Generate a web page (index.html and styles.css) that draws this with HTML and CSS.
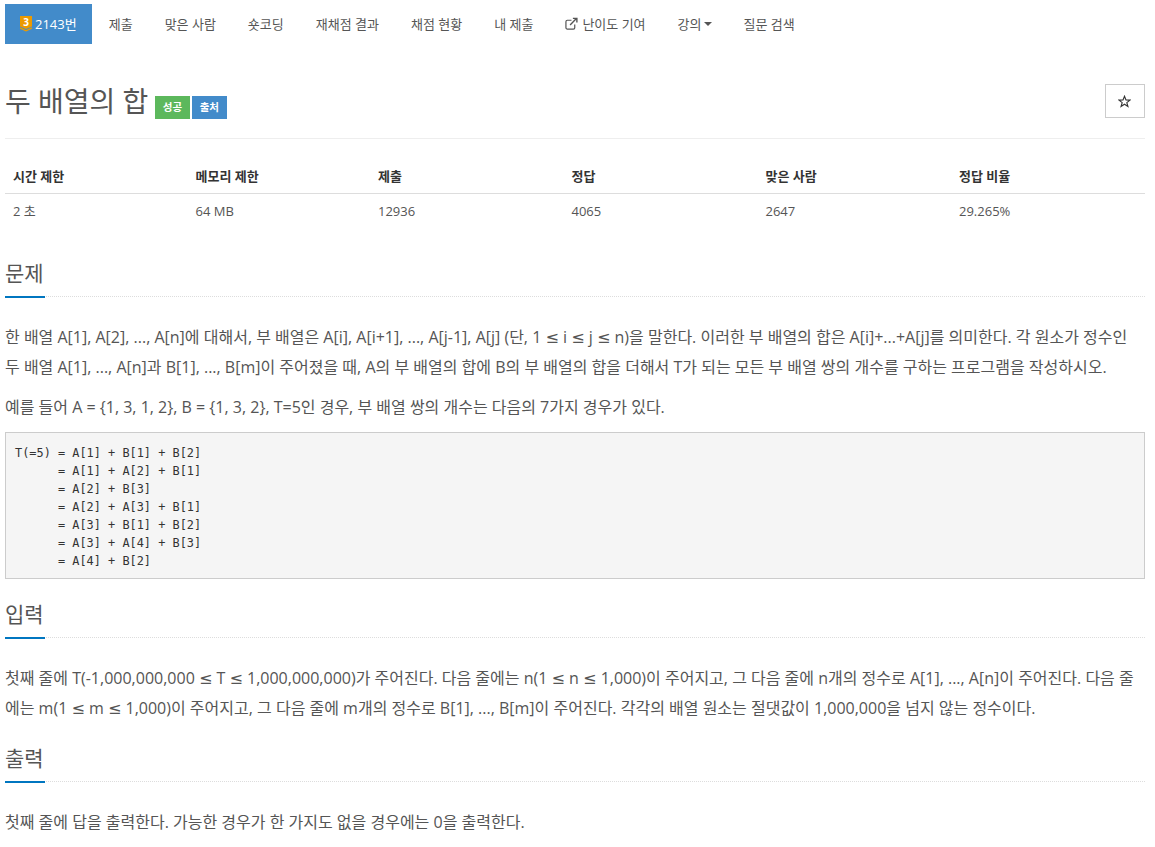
FILE: index.html
```html
<!DOCTYPE html>
<html lang="ko">
<head>
<meta charset="utf-8">
<title>두 배열의 합</title>
<link rel="stylesheet" href="styles.css">
</head>
<body>
<nav class="tabs">
  <a class="tab active"><svg class="medal" viewBox="0 0 12 16" width="12" height="16"><path d="M0 0H12V10.500L6 13L0 10.500Z" fill="#ec9a00"/><path d="M0 12L6 14.800L12 12" fill="none" stroke="#ec9a00" stroke-width="1.400"/><text x="6" y="10" class="medal-num">3</text></svg>2143번</a>
  <a class="tab">제출</a>
  <a class="tab">맞은 사람</a>
  <a class="tab">숏코딩</a>
  <a class="tab">재채점 결과</a>
  <a class="tab">채점 현황</a>
  <a class="tab">내 제출</a>
  <a class="tab"><svg class="ext" viewBox="0 0 14 14" width="13" height="13"><path d="M10.500 8V11.500A1.500 1.500 0 0 1 9 13H2.500A1.500 1.500 0 0 1 1 11.500V5A1.500 1.500 0 0 1 2.500 3.500H7" fill="none" stroke="#555" stroke-width="1.300"/><path d="M5.500 8.500L12 2M8.500 1.500H12.800V5.800" fill="none" stroke="#555" stroke-width="1.500"/></svg>난이도 기여</a>
  <a class="tab">강의<span class="caret"></span></a>
  <a class="tab">질문 검색</a>
</nav>

<header class="title-row">
  <h1 class="title">두 배열의 합</h1>
  <span class="label green">성공</span>
  <span class="label blue">출처</span>
  <button class="star"><svg viewBox="0 0 14 14" width="13" height="13"><path d="M7 1.300L8.600 5.300L12.900 5.500L9.500 8.200L10.700 12.400L7 10L3.300 12.400L4.500 8.200L1.100 5.500L5.400 5.300Z" fill="none" stroke="#333" stroke-width="1.200"/></svg></button>
</header>

<table class="stats">
  <thead>
    <tr><th class="c1">시간 제한</th><th class="c2">메모리 제한</th><th class="c3">제출</th><th class="c4">정답</th><th class="c5">맞은 사람</th><th>정답 비율</th></tr>
  </thead>
  <tbody>
    <tr><td>2 초</td><td>64 MB</td><td>12936</td><td>4065</td><td>2647</td><td>29.265%</td></tr>
  </tbody>
</table>

<section class="section">
  <div class="head"><h2 class="head-text">문제</h2></div>
  <p class="para"><span class="line">한 배열 A[1], A[2], ..., A[n]에 대해서, 부 배열은 A[i], A[i+1], ..., A[j-1], A[j] (단, 1 <span class="le">≤</span> i <span class="le">≤</span> j <span class="le">≤</span> n)을 말한다. 이러한 부 배열의 합은 A[i]+...+A[j]를 의미한다. 각 원소가 정수인</span><span class="line">두 배열 A[1], ..., A[n]과 B[1], ..., B[m]이 주어졌을 때, A의 부 배열의 합에 B의 부 배열의 합을 더해서 T가 되는 모든 부 배열 쌍의 개수를 구하는 프로그램을 작성하시오.</span></p>
  <p class="para">예를 들어 A = {1, 3, 1, 2}, B = {1, 3, 2}, T=5인 경우, 부 배열 쌍의 개수는 다음의 7가지 경우가 있다.</p>
  <pre class="code">T(=5) = A[1] + B[1] + B[2]
      = A[1] + A[2] + B[1]
      = A[2] + B[3]
      = A[2] + A[3] + B[1]
      = A[3] + B[1] + B[2]
      = A[3] + A[4] + B[3]
      = A[4] + B[2]</pre>
</section>

<section class="section">
  <div class="head"><h2 class="head-text">입력</h2></div>
  <p class="para"><span class="line">첫째 줄에 T(-1,000,000,000 <span class="le">≤</span> T <span class="le">≤</span> 1,000,000,000)가 주어진다. 다음 줄에는 n(1 <span class="le">≤</span> n <span class="le">≤</span> 1,000)이 주어지고, 그 다음 줄에 n개의 정수로 A[1], ..., A[n]이 주어진다. 다음 줄</span><span class="line">에는 m(1 <span class="le">≤</span> m <span class="le">≤</span> 1,000)이 주어지고, 그 다음 줄에 m개의 정수로 B[1], ..., B[m]이 주어진다. 각각의 배열 원소는 절댓값이 1,000,000을 넘지 않는 정수이다.</span></p>
</section>

<section class="section">
  <div class="head"><h2 class="head-text">출력</h2></div>
  <p class="para">첫째 줄에 답을 출력한다. 가능한 경우가 한 가지도 없을 경우에는 0을 출력한다.</p>
</section>
</body>
</html>
```
FILE: styles.css
```css
* { box-sizing: border-box; }
html { overflow: hidden; }
body {
  margin: 0;
  padding: 4px 10px 0 5px;
  font-family: "Open Sans", "Noto Sans CJK KR", sans-serif;
  font-size: 14px;
  line-height: 20px;
  color: #555;
  background: #fff;
}
.tabs { display: flex; height: 40px; }
.tab {
  display: flex;
  align-items: center;
  padding: 0 16px 1px;
  font-size: 13px;
  color: #555;
  white-space: nowrap;
}
.tab.active { background: #428bca; color: #fff; padding: 0 15px 1px; margin-right: 1px; }
.medal { margin-right: 3px; }
.medal-num { font: bold 10px "Open Sans", sans-serif; fill: #fff; text-anchor: middle; }
.ext { margin-right: 4px; }
.caret {
  display: inline-block;
  width: 0;
  height: 0;
  margin-left: 2px;
  border-top: 4px solid #555;
  border-left: 4px solid transparent;
  border-right: 4px solid transparent;
}
.title-row {
  display: flex;
  align-items: flex-end;
  height: 95px;
  padding-bottom: 19px;
  margin-bottom: 20px;
  border-bottom: 1px solid #eee;
  position: relative;
}
.title { margin: 0 7px 0 0; font-size: 28px; line-height: 36px; font-weight: 400; color: #555; }
.label {
  display: block;
  font-size: 10.500px;
  font-weight: 700;
  line-height: 23px;
  height: 23px;
  padding: 0 7.500px;
  color: #fff;
  margin-right: 3px;
}
.green { background: #5cb85c; margin-right: 2.500px; }
.blue { background: #428bca; }
.star {
  position: absolute;
  right: 0;
  top: 40px;
  width: 40px;
  height: 34px;
  border: 1px solid #ccc;
  background: #fff;
  padding: 3px 2px 0 0;
}
.stats { width: 100%; border-collapse: collapse; table-layout: fixed; font-size: 13px; margin-bottom: 24px; }
.stats th { text-align: left; padding: 6px 8px; height: 34px; font-weight: 700; color: #333; border-bottom: 1px solid #ddd; }
.stats td { padding: 6px 8px; height: 35px; color: #555; }
.c1, .c2 { width: 182.500px; }
.c3, .c5 { width: 193.500px; }
.c4 { width: 194px; }
.section { margin-bottom: 14px; }
.head { border-bottom: 1px dotted #ddd; height: 45px; margin-bottom: 25px; }
.head-text {
  display: inline-block;
  margin: 0;
  height: 46px;
  padding-top: 8px;
  font-size: 21px;
  line-height: 26px;
  font-weight: 400;
  color: #555;
  border-bottom: 2px solid #0076c0;
  padding-right: 1px;
}
.para { margin: 0 0 10px; font-size: 16px; line-height: 30px; color: #555; }
.line { display: block; white-space: nowrap; }
.le { font-family: "DejaVu Sans", sans-serif; line-height: 1; }
.code {
  margin: 0;
  height: 147px;
  padding: 11px 9px 9px;
  font-family: "DejaVu Sans Mono", monospace;
  font-size: 11.900px;
  line-height: 18px;
  color: #333;
  background: #f5f5f5;
  border: 1px solid #ccc;
}
```
